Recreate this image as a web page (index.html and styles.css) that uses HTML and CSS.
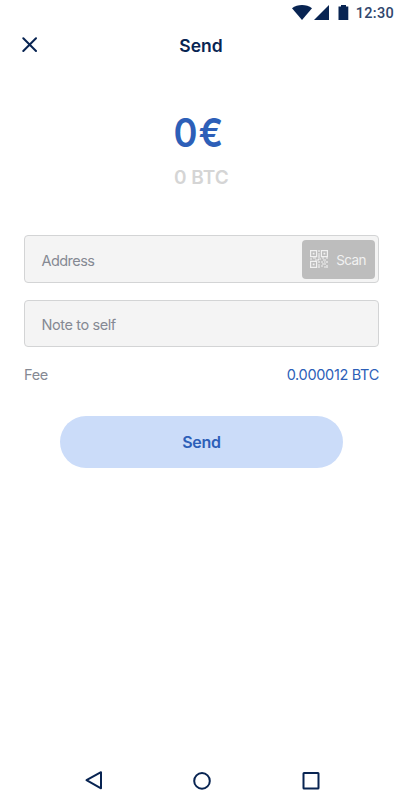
FILE: index.html
```html
<!DOCTYPE html>
<html lang="en">
<head>
<meta charset="utf-8">
<title>Send</title>
<link rel="stylesheet" href="styles.css">
</head>
<body>
<div class="screen">
  <div class="status">
    <svg width="58" height="18" viewBox="0 0 58 18" fill="currentColor"><path d="M0 6.300C5.500 1.900 14.500 1.900 20 6.300L10 18Z"/><path d="M22 18 37 3V18Z"/><path d="M46.500 4.500h2.500V3h5v1.500h2.300V18h-9.800Z"/></svg>
    <span class="time">12:30</span>
  </div>
  <header class="header">
    <svg class="close" width="16" height="16" viewBox="0 0 16 16" fill="none" stroke="currentColor" stroke-width="2" stroke-linecap="round"><path d="M1.300 1.300 14 14M14 1.300 1.300 14"/></svg>
    <h1 class="title">Send</h1>
  </header>
  <main class="main">
    <div class="amount">0€</div>
    <div class="converted">0 BTC</div>
    <div class="field">
      <span class="address">Address</span>
      <button class="scan">
        <svg width="18" height="18" viewBox="0 0 18 18" fill="none" stroke="currentColor" stroke-width="1.200"><path d="M.6.6h6v6h-6zM11.400.6h6v6h-6zM.6 11.400h6v6h-6z"/><path d="M2.700 3.600h1.800M13.500 3.600h1.800M2.700 14.400h1.800" stroke-width="1.800"/><path d="M9 0v2M8 4h2M9 5v3M0 9h2M3 8h3M5 10h4M8 9h3M12 8h2M13 10h3M16 8h2M9 11v2M8 15h2M9 16v2M11 12h2M14 12h1.500M17 11v2M12 14h4M11 16h2M14 17h2M17 15v3"/></svg>
        <span class="scan-label">Scan</span>
      </button>
    </div>
    <div class="field"><span class="note">Note to self</span></div>
    <div class="fee"><span class="fee-label">Fee</span><span class="fee-value">0.000012 BTC</span></div>
    <button class="send"><span>Send</span></button>
  </main>
  <nav class="nav">
    <svg width="20" height="22" viewBox="0 0 20 22"><path d="M2.500 11.200 17 3.200V19.300Z"/></svg>
    <svg width="20" height="22" viewBox="0 0 20 22"><circle cx="10" cy="11.900" r="7.800"/></svg>
    <svg width="20" height="22" viewBox="0 0 20 22"><rect x="2.500" y="4" width="15" height="15.500" rx=".5"/></svg>
  </nav>
</div>
</body>
</html>
```
FILE: styles.css
```css
* { box-sizing: border-box; }
body { margin: 0; background: #fff; font-family: Inter, "Liberation Sans", sans-serif; color: #082452; }
button { border: 0; padding: 0; font: inherit; }
svg { display: block; flex: none; }
.screen { width: 403px; height: 806px; display: flex; flex-direction: column; overflow: hidden; }
.status { height: 26px; padding: 2px 9px 0 292px; display: flex; align-items: flex-start; justify-content: space-between; }
.time { font: 500 14.5px/22px Roboto, sans-serif; letter-spacing: .3px; color: #30466c; white-space: nowrap; padding-top: 1px; }
.header { height: 40px; display: grid; grid-template-columns: 60px 1fr 60px; align-items: center; }
.close { margin: -2px 0 0 22px; }
.title { margin: 0; padding-right: 1px; text-align: center; font-size: 17.5px; line-height: 24px; font-weight: 600; }
.main { padding: 42px 24px 0; display: flex; flex-direction: column; flex: 1; }
.amount { height: 50px; line-height: 50px; padding-left: 149.5px; font-size: 40px; font-weight: 600; letter-spacing: 1px; color: #2d5fb8; transform: scaleX(.91); transform-origin: 149.5px 50%; }
.converted { height: 24px; margin-top: 8px; line-height: 24px; padding-left: 150px; font-size: 19px; font-weight: 600; color: #d5d5d5; }
.field { height: 48px; margin-top: 17px; padding: 0 3px 0 16.5px; display: flex; align-items: center; justify-content: space-between; background: #f4f4f4; border: 1px solid #d3d4d5; border-radius: 4px; font-size: 14.5px; color: #858993; }
.converted + .field { margin-top: 45px; }
.field + .field { height: 47px; }
.scan { width: 73px; height: 39px; padding: 0 9px 0 8px; border-radius: 4px; display: flex; align-items: center; justify-content: space-between; background: #bdbdbd; color: #f1f1f1; }
.scan-label { font-size: 13.5px; letter-spacing: -.55px; padding-top: 1px; }
.address { padding-top: 3px; letter-spacing: -.55px; }
.note { padding-top: 2px; letter-spacing: -.4px; }
.fee { height: 24px; margin-top: 16px; display: flex; justify-content: space-between; line-height: 24px; font-size: 14.5px; color: #858993; }
.fee-label { letter-spacing: -.3px; }
.fee-value { color: #2d5fb8; letter-spacing: -.32px; }
.send { align-self: center; width: 283px; height: 52px; margin-top: 29px; border-radius: 26px; background: #cbdcf9; color: #2d5fb8; font-size: 16px; font-weight: 600; letter-spacing: -.3px; }
.nav { height: 37px; padding: 0 82px 0 84px; display: flex; justify-content: space-between; }
.nav svg { fill: none; stroke: currentColor; stroke-width: 2; stroke-linejoin: round; }
.nav svg:nth-child(2) { margin-left: -2px; }
```
